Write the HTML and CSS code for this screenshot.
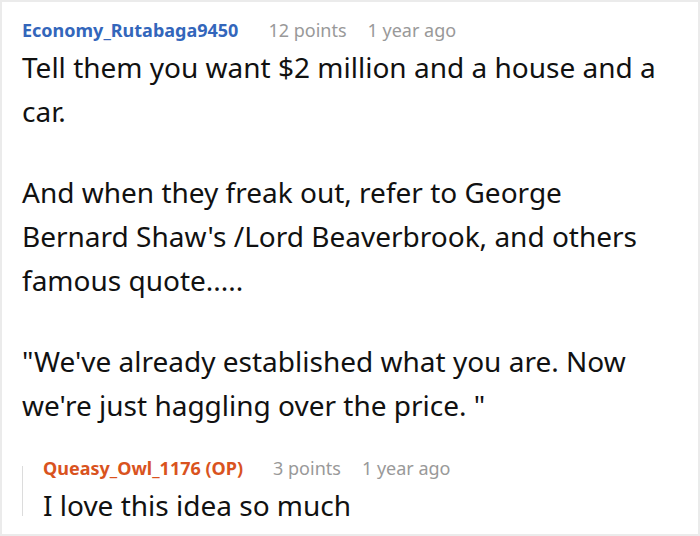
FILE: index.html
```html
<!DOCTYPE html>
<html>
<head>
<meta charset="utf-8">
<link rel="stylesheet" href="styles.css">
</head>
<body>
<div class="card">
  <div class="meta">
    <span class="user">Economy_Rutabaga9450</span>
    <span class="points">12 points</span>
    <span class="time">1 year ago</span>
  </div>
  <div class="body">
    <p>Tell them you want $2 million and a house and a car.</p>
    <p>And when they freak out, refer to George Bernard Shaw's /Lord Beaverbrook, and others famous quote.....</p>
    <p>"We've already established what you are. Now we're just haggling over the price. "</p>
  </div>
  <div class="reply">
    <div class="meta">
      <span class="user op">Queasy_Owl_1176 (OP)</span>
      <span class="points">3 points</span>
      <span class="time">1 year ago</span>
    </div>
    <div class="body">
      <p>I love this idea so much</p>
    </div>
  </div>
</div>
</body>
</html>
```
FILE: styles.css
```css
* { box-sizing: border-box; }
html, body { margin: 0; padding: 0; background: #fff; }
body { font-family: "Noto Sans", "Open Sans", sans-serif; color: #111; }
.card {
  width: 700px;
  height: 536px;
  border: 2px solid #ebebeb;
  padding: 17px 35px 0 20px;
  overflow: hidden;
}
.meta {
  display: flex;
  align-items: baseline;
  font-size: 18px;
  line-height: 22px;
  color: #999;
}
.user { font-weight: bold; color: #3366bb; margin-right: 30px; }
.user.op { color: #d9531e; }
.points { margin-right: 21px; }
.body {
  margin-top: 4px;
  font-size: 28px;
  line-height: 44px;
}
.body p { margin: 0 0 37px 0; }
.body p:last-child { margin-bottom: 0; }
.reply {
  position: relative;
  margin-top: 30px;
  padding-left: 21px;
}
.reply::before {
  content: "";
  position: absolute;
  left: 0;
  top: 9px;
  bottom: 11px;
  width: 1px;
  background: #dcdcdc;
}
```
